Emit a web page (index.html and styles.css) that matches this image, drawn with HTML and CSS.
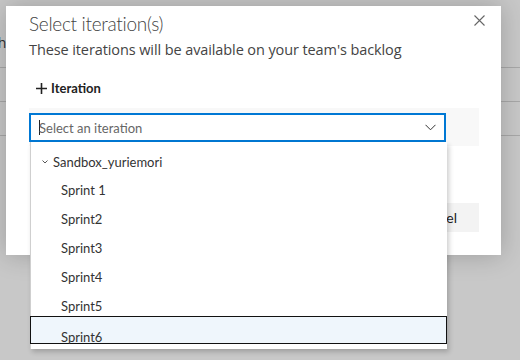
FILE: index.html
```html
<!DOCTYPE html>
<html lang="en">
<head>
  <meta charset="UTF-8" />
  <title>Select iteration(s)</title>
  <link rel="stylesheet" href="styles.css">
</head>
<body>
  <div class="page">
    <div class="page-head"><span class="page-title">Search</span></div>
    <div class="page-row"></div>
    <div class="page-row"></div>
  </div>

  <div class="dialog">
    <button class="close" aria-label="Close">
      <svg width="11" height="11" viewBox="0 0 11 11"><path d="M0.5 0.5L10.5 10.5M10.5 0.5L0.5 10.5" stroke="#666" stroke-width="1.1" fill="none"/></svg>
    </button>
    <h2 class="title">Select iteration(s)</h2>
    <p class="subtitle">These iterations will be available on your team's backlog</p>

    <div class="add">
      <svg width="11" height="11" viewBox="0 0 11 11"><path d="M5.5 0V11M0 5.5H11" stroke="#222" stroke-width="1.6" fill="none"/></svg>
      <span>Iteration</span>
    </div>

    <div class="pick-row">
      <div class="combo">
        <span class="caret"></span>
        <span class="placeholder">Select an iteration</span>
        <svg class="chev" width="11" height="7" viewBox="0 0 11 7"><path d="M0.5 0.8L5.5 5.8L10.5 0.8" stroke="#333" stroke-width="1" fill="none"/></svg>
      </div>
    </div>

    <div class="actions">
      <button class="btn primary">Save</button>
      <button class="btn">Cancel</button>
    </div>

    <ul class="dropdown">
      <li class="node">
        <svg width="6" height="4" viewBox="0 0 6 4"><path d="M0.5 0.5L3 3L5.5 0.5" stroke="#444" stroke-width="0.9" fill="none"/></svg>
        Sandbox_yuriemori
      </li>
      <li class="leaf">Sprint 1</li>
      <li class="leaf">Sprint2</li>
      <li class="leaf">Sprint3</li>
      <li class="leaf">Sprint4</li>
      <li class="leaf">Sprint5</li>
      <li class="leaf selected">Sprint6</li>
    </ul>
  </div>
</body>
</html>
```

FILE: styles.css
```css
body {
  margin: 0;
  background: #c8c8c8;
  font-family: 'Open Sans', 'Noto Sans', sans-serif;
  color: #333;
  overflow: hidden;
}
.page {
  height: 360px;
}
.page-head {
  height: 68px;
  border-bottom: 1px solid #a8a8a8;
  box-sizing: border-box;
}
.page-title {
  display: inline-block;
  margin: 33px 0 0 -38px;
  font-size: 14px;
  color: #303030;
}
.page-row {
  height: 34px;
  border-bottom: 1px solid #a8a8a8;
  box-sizing: border-box;
}
.dialog {
  position: absolute;
  left: 6px;
  top: 6px;
  width: 495px;
  height: 249px;
  box-sizing: border-box;
  background: #fff;
  padding: 5px 22px 0 23px;
  box-shadow: 0 0 24px rgba(0, 0, 0, 0.22);
}
.close {
  position: absolute;
  right: 16px;
  top: 8px;
  border: none;
  background: none;
  padding: 0;
}
.title {
  margin: 0;
  font-family: Lato, sans-serif;
  font-size: 19px;
  font-weight: 300;
  line-height: 26px;
  letter-spacing: -0.3px;
  color: #444;
}
.subtitle {
  margin: 2px 0 0;
  font-size: 14.5px;
  line-height: 22px;
  color: #444;
  letter-spacing: -0.1px;
}
.add {
  display: flex;
  align-items: center;
  gap: 4px;
  margin: 18px 0 0 7px;
  height: 18px;
  font-family: Lato, sans-serif;
  font-size: 13px;
  font-weight: 700;
  color: #222;
}
.pick-row {
  margin-top: 11px;
  height: 38px;
  padding-top: 5px;
  box-sizing: border-box;
  background: #f8f8f8;
}
.combo {
  width: 417px;
  height: 29px;
  box-sizing: border-box;
  border: 2px solid #0078d4;
  background: #fff;
  display: flex;
  align-items: center;
  padding: 0 8px 0 8px;
}
.caret {
  width: 1px;
  height: 15px;
  background: #222;
  margin-right: -1px;
}
.placeholder {
  flex: 1;
  font-family: Lato, sans-serif;
  font-size: 13px;
  color: #666;
}
.actions {
  display: flex;
  justify-content: flex-end;
  gap: 8px;
  margin-top: 57px;
}
.btn {
  height: 29px;
  padding: 0 22px;
  border: none;
  background: #f3f3f3;
  font-family: Lato, sans-serif;
  font-size: 14px;
  color: #222;
}
.btn.primary {
  background: #0078d4;
  color: #fff;
}
.dropdown {
  position: absolute;
  left: 24px;
  top: 136px;
  width: 417px;
  margin: 0;
  padding: 0 0 5px;
  list-style: none;
  background: #fff;
  border-left: 1px solid #cfcfcf;
  box-sizing: border-box;
  box-shadow: 2px 3px 5px rgba(0, 0, 0, 0.2);
  font-family: Lato, sans-serif;
}
.dropdown li {
  height: 29px;
  box-sizing: border-box;
  padding-top: 10px;
  line-height: 18px;
  font-size: 13px;
  color: #333;
}
.node {
  display: flex;
  align-items: center;
  gap: 5px;
  padding-left: 11px;
}
.node svg {
  margin-top: 1px;
}
.leaf {
  padding-left: 30px;
}
.leaf.selected {
  background: #eff6fc;
  border: 1px solid #111;
  margin-left: -1px;
  padding-left: 30px;
  padding-top: 11px;
  height: 28px;
  width: 417px;
}
```
